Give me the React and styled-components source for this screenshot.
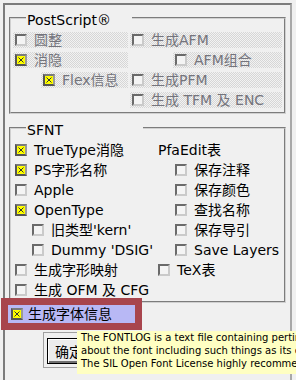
import React from 'react';
import styled, { createGlobalStyle } from 'styled-components';

const Global = createGlobalStyle`
  html, body { margin: 0; padding: 0; background: #f0f0f0; }
  body {
    font-family: "DejaVu Sans", "Noto Sans CJK SC", sans-serif;
    font-size: 14px;
    color: #000;
  }
`;

const Page = styled.div`
  position: relative;
  width: 296px;
  height: 380px;
  overflow: hidden;
  box-sizing: border-box;
  padding: 3px 4px 0 3px;
  background: #f0f0f0;
`;

const Window = styled.div`
  box-sizing: border-box;
  min-height: 400px;
  border: 2px solid;
  border-color: #7c7c7c #a8a8a8 #a8a8a8 #7c7c7c;
  padding: 0 4px;
`;

const Group = styled.fieldset`
  margin: ${p => p.$top}px 0 0 0;
  padding: 2px 2px ${p => p.$bottom}px 2px;
  border: 2px groove #d0d0d0;
  min-width: 0;
`;

const Legend = styled.legend`
  padding: 4px ${p => p.$gap}px 0 1px;
  margin-left: 13px;
  font-size: 14px;
  line-height: 16px;
  color: #000;
`;

const Grid = styled.div`
  display: grid;
  grid-template-columns: ${p => p.$cols};
  column-gap: ${p => p.$gap}px;
  align-items: start;
`;

const Column = styled.div`
  display: flex;
  flex-direction: column;
`;

const stipple = `repeating-conic-gradient(#d6d6d6 0 25%, #f2f2f2 0 50%) 0 0 / 2px 2px`;

const Option = styled.label`
  display: flex;
  align-items: center;
  gap: 7px;
  height: 16px;
  margin: 2px 0 2px ${p => p.$indent || 0}px;
  padding-left: 2px;
  font-size: 14px;
  line-height: 16px;
  white-space: nowrap;
  color: ${p => (p.$disabled ? '#74747c' : '#000')};
  background: ${p => (p.$disabled ? stipple : 'transparent')};
`;

const Heading = styled.div`
  height: 16px;
  margin: 2px 0;
  padding-left: 2px;
  line-height: 16px;
  white-space: nowrap;
`;

const Highlight = styled.label`
  display: flex;
  align-items: center;
  gap: 5px;
  width: 127px;
  height: 18px;
  margin: 2px 0 0 -1px;
  padding-left: 3px;
  box-sizing: border-box;
  background: #b8b8f5;
  outline: 7px solid #a8454d;
  line-height: 16px;
  white-space: nowrap;
`;

const Box = styled.span`
  flex: none;
  width: 12px;
  height: 12px;
  box-sizing: border-box;
  display: flex;
  align-items: center;
  justify-content: center;
  border: 2px solid;
  border-color: ${p =>
    p.$checked ? '#7a7a7a #9a9a9a #555 #555' : '#6a6a6a #cacaca #cacaca #6a6a6a'};
  background: ${p => (p.$checked ? '#ffff00' : '#f4f4f4')};
`;

const Check = ({ checked }) => (
  <Box $checked={checked}>
    {checked && (
      <svg width="6" height="6" viewBox="0 0 6 6">
        <path d="M0.5 0.5L5.5 5.5M5.5 0.5L0.5 5.5" stroke="#333" strokeWidth="1" />
      </svg>
    )}
  </Box>
);

const Item = ({ label, checked, disabled, indent }) => (
  <Option $disabled={disabled} $indent={indent}>
    <Check checked={checked} />
    <span>{label}</span>
  </Option>
);

const ButtonFrame = styled.div`
  display: inline-flex;
  margin: 9px 0 0 34px;
  padding: 5px 3px 3px 3px;
  border: 1px solid #a0a0a0;
`;

const Button = styled.button`
  height: 26px;
  padding: 0 22px 0 7px;
  box-sizing: border-box;
  border: 1px solid #000;
  background: #ececec;
  box-shadow: inset 1px 1px 0 #fff, inset -2px -2px 0 #707070;
  font-family: inherit;
  font-size: 14px;
  color: #000;
`;

const Tooltip = styled.div`
  position: absolute;
  left: 77px;
  top: 331px;
  padding: 0 6px 4px 4px;
  background: #ffffc2;
  font-size: 10px;
  line-height: 13px;
  white-space: nowrap;
  color: #000;
`;

export default function App() {
  return (
    <Page>
      <Global />
      <Window>
        <Group $top={3} $bottom={2}>
          <Legend $gap={21}>PostScript®</Legend>
          <Grid $cols="115px 1fr" $gap={2}>
            <Column>
              <Item label="圆整" disabled />
              <Item label="消隐" disabled checked />
              <Item label="Flex信息" disabled checked indent={28} />
            </Column>
            <Column>
              <Item label="生成AFM" disabled />
              <Item label="AFM组合" disabled indent={43} />
              <Item label="生成PFM" disabled />
              <Item label="生成 TFM 及 ENC" disabled />
            </Column>
          </Grid>
        </Group>
        <Group $top={4} $bottom={1}>
          <Legend $gap={80}>SFNT</Legend>
          <Grid $cols="143px 1fr" $gap={0}>
            <Column>
              <Item label="TrueType消隐" checked />
              <Item label="PS字形名称" checked />
              <Item label="Apple" />
              <Item label="OpenType" checked />
              <Item label="旧类型'kern'" indent={17} />
              <Item label="Dummy 'DSIG'" indent={17} />
              <Item label="生成字形映射" />
              <Item label="生成 OFM 及 CFG" />
            </Column>
            <Column>
              <Heading>PfaEdit表</Heading>
              <Item label="保存注释" indent={17} />
              <Item label="保存颜色" indent={17} />
              <Item label="查找名称" indent={17} />
              <Item label="保存导引" indent={17} />
              <Item label="Save Layers" indent={17} />
              <Item label="TeX表" />
            </Column>
          </Grid>
        </Group>
        <Highlight>
          <Check checked />
          <span>生成字体信息</span>
        </Highlight>
        <ButtonFrame>
          <Button>确定</Button>
        </ButtonFrame>
      </Window>
      <Tooltip>
        <div>The FONTLOG is a text file containing pertinent information</div>
        <div>about the font including such things as its changelog.</div>
        <div>The SIL Open Font License highly recommends its use.</div>
      </Tooltip>
    </Page>
  );
}
